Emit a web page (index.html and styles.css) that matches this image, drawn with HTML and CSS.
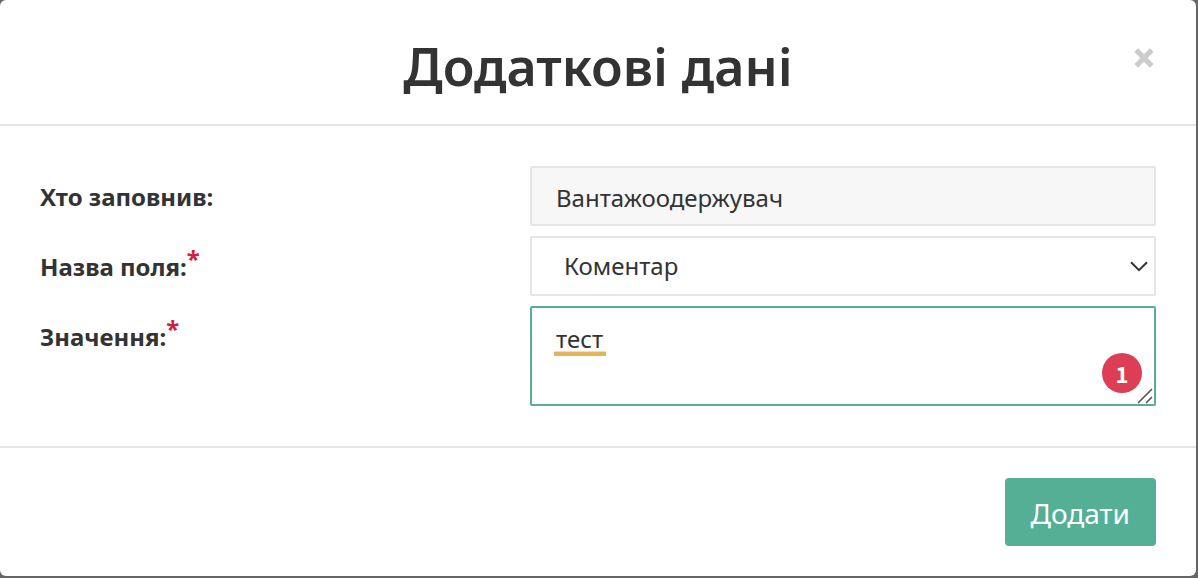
FILE: index.html
```html
<!DOCTYPE html>
<html lang="uk">
<head>
<meta charset="utf-8">
<title>Додаткові дані</title>
<link rel="stylesheet" href="styles.css">
</head>
<body>
<form class="modal" role="dialog" aria-labelledby="modal-title">
  <header class="modal-header">
    <h1 class="modal-title" id="modal-title">Додаткові дані</h1>
    <button class="close" type="button" aria-label="Закрити">
      <svg width="20" height="20" viewBox="0 0 20 20" aria-hidden="true"><path d="M2.2 2.2 17.8 17.8M17.8 2.2 2.2 17.8" stroke="#ccc" stroke-width="5.2"/></svg>
    </button>
  </header>
  <div class="modal-body">
    <div class="row">
      <label class="label" for="author">Хто заповнив:</label>
      <input class="control readonly" id="author" type="text" value="Вантажоодержувач" readonly>
    </div>
    <div class="row">
      <label class="label" for="field">Назва поля:<span class="required">*</span></label>
      <div class="field">
        <select class="control select" id="field"><option>Коментар</option></select>
        <svg class="chevron" width="18" height="11" viewBox="0 0 18 11" aria-hidden="true"><path d="M1 1.2 9 9.2 17 1.2" fill="none" stroke="#333" stroke-width="2"/></svg>
      </div>
    </div>
    <div class="row">
      <label class="label" for="value">Значення:<span class="required">*</span></label>
      <div class="field">
        <textarea class="control textarea" id="value" spellcheck="false">тест</textarea>
        <span class="spelling"></span>
        <span class="badge">1</span>
        <svg class="grip" width="16" height="16" viewBox="0 0 16 16" aria-hidden="true"><path d="M1 15 15 1M9 15 15 9" stroke="#555" stroke-width="1.6"/></svg>
      </div>
    </div>
  </div>
  <footer class="modal-footer">
    <button class="submit" type="submit">Додати</button>
  </footer>
</form>
</body>
</html>
```
FILE: styles.css
```css
* {
  box-sizing: border-box;
}

body {
  margin: 0;
  padding: 0 2px 2px 0;
  background: #666;
  color: #333;
  font-family: "Noto Sans", "Open Sans", sans-serif;
  font-size: 24px;
  line-height: 34px;
}

.modal {
  background: #fff;
  border-radius: 6px;
}

.modal-header {
  position: relative;
  padding: 30px 40px 22px;
  border-bottom: 2px solid #e5e5e5;
}

.modal-title {
  margin: 0;
  font-size: 52px;
  font-weight: 600;
  line-height: 72px;
  text-align: center;
}

.close {
  position: absolute;
  top: 48px;
  right: 42px;
  display: flex;
  padding: 0;
  border: 0;
  background: none;
}

.modal-body {
  display: flex;
  flex-direction: column;
  gap: 10px;
  padding: 40px;
}

.row {
  display: grid;
  grid-template-columns: 245fr 313fr;
}

.label {
  padding-top: 14px;
  font-weight: 700;
}

.required {
  position: relative;
  top: -8px;
  color: #d0223f;
  font-size: 24px;
  line-height: 0;
}

.field {
  position: relative;
  display: flex;
}

.control {
  width: 100%;
  height: 60px;
  padding: 2px 24px 0;
  border: 2px solid #e5e5e5;
  border-radius: 2px;
  outline: 0;
  background: #fff;
  color: #333;
  font: inherit;
}

.readonly {
  background: #f7f7f7;
}

.select {
  padding: 0 32px;
  appearance: none;
}

.chevron {
  position: absolute;
  top: 25px;
  right: 8px;
}

.textarea {
  height: 100px;
  padding: 14px 24px;
  border-color: #55af95;
  resize: none;
}

.spelling {
  position: absolute;
  top: 45px;
  left: 24px;
  width: 52px;
  height: 5px;
  border-top: 1px solid #f3dcb2;
  background: #e6b35a;
}

.badge {
  position: absolute;
  right: 14px;
  bottom: 13px;
  width: 40px;
  height: 40px;
  border-radius: 50%;
  background: #dc3f55;
  color: #fff;
  font-family: "Noto Sans CJK SC", sans-serif;
  font-size: 22px;
  font-weight: 700;
  line-height: 40px;
  text-align: center;
}

.grip {
  position: absolute;
  right: 3px;
  bottom: 2px;
}

.modal-footer {
  display: flex;
  justify-content: flex-end;
  padding: 30px 40px;
  border-top: 2px solid #e5e5e5;
}

.submit {
  height: 68px;
  padding: 2px 26px 0;
  border: 0;
  border-radius: 4px;
  background: #55af95;
  color: #fff;
  font: inherit;
  font-size: 28px;
}
```
